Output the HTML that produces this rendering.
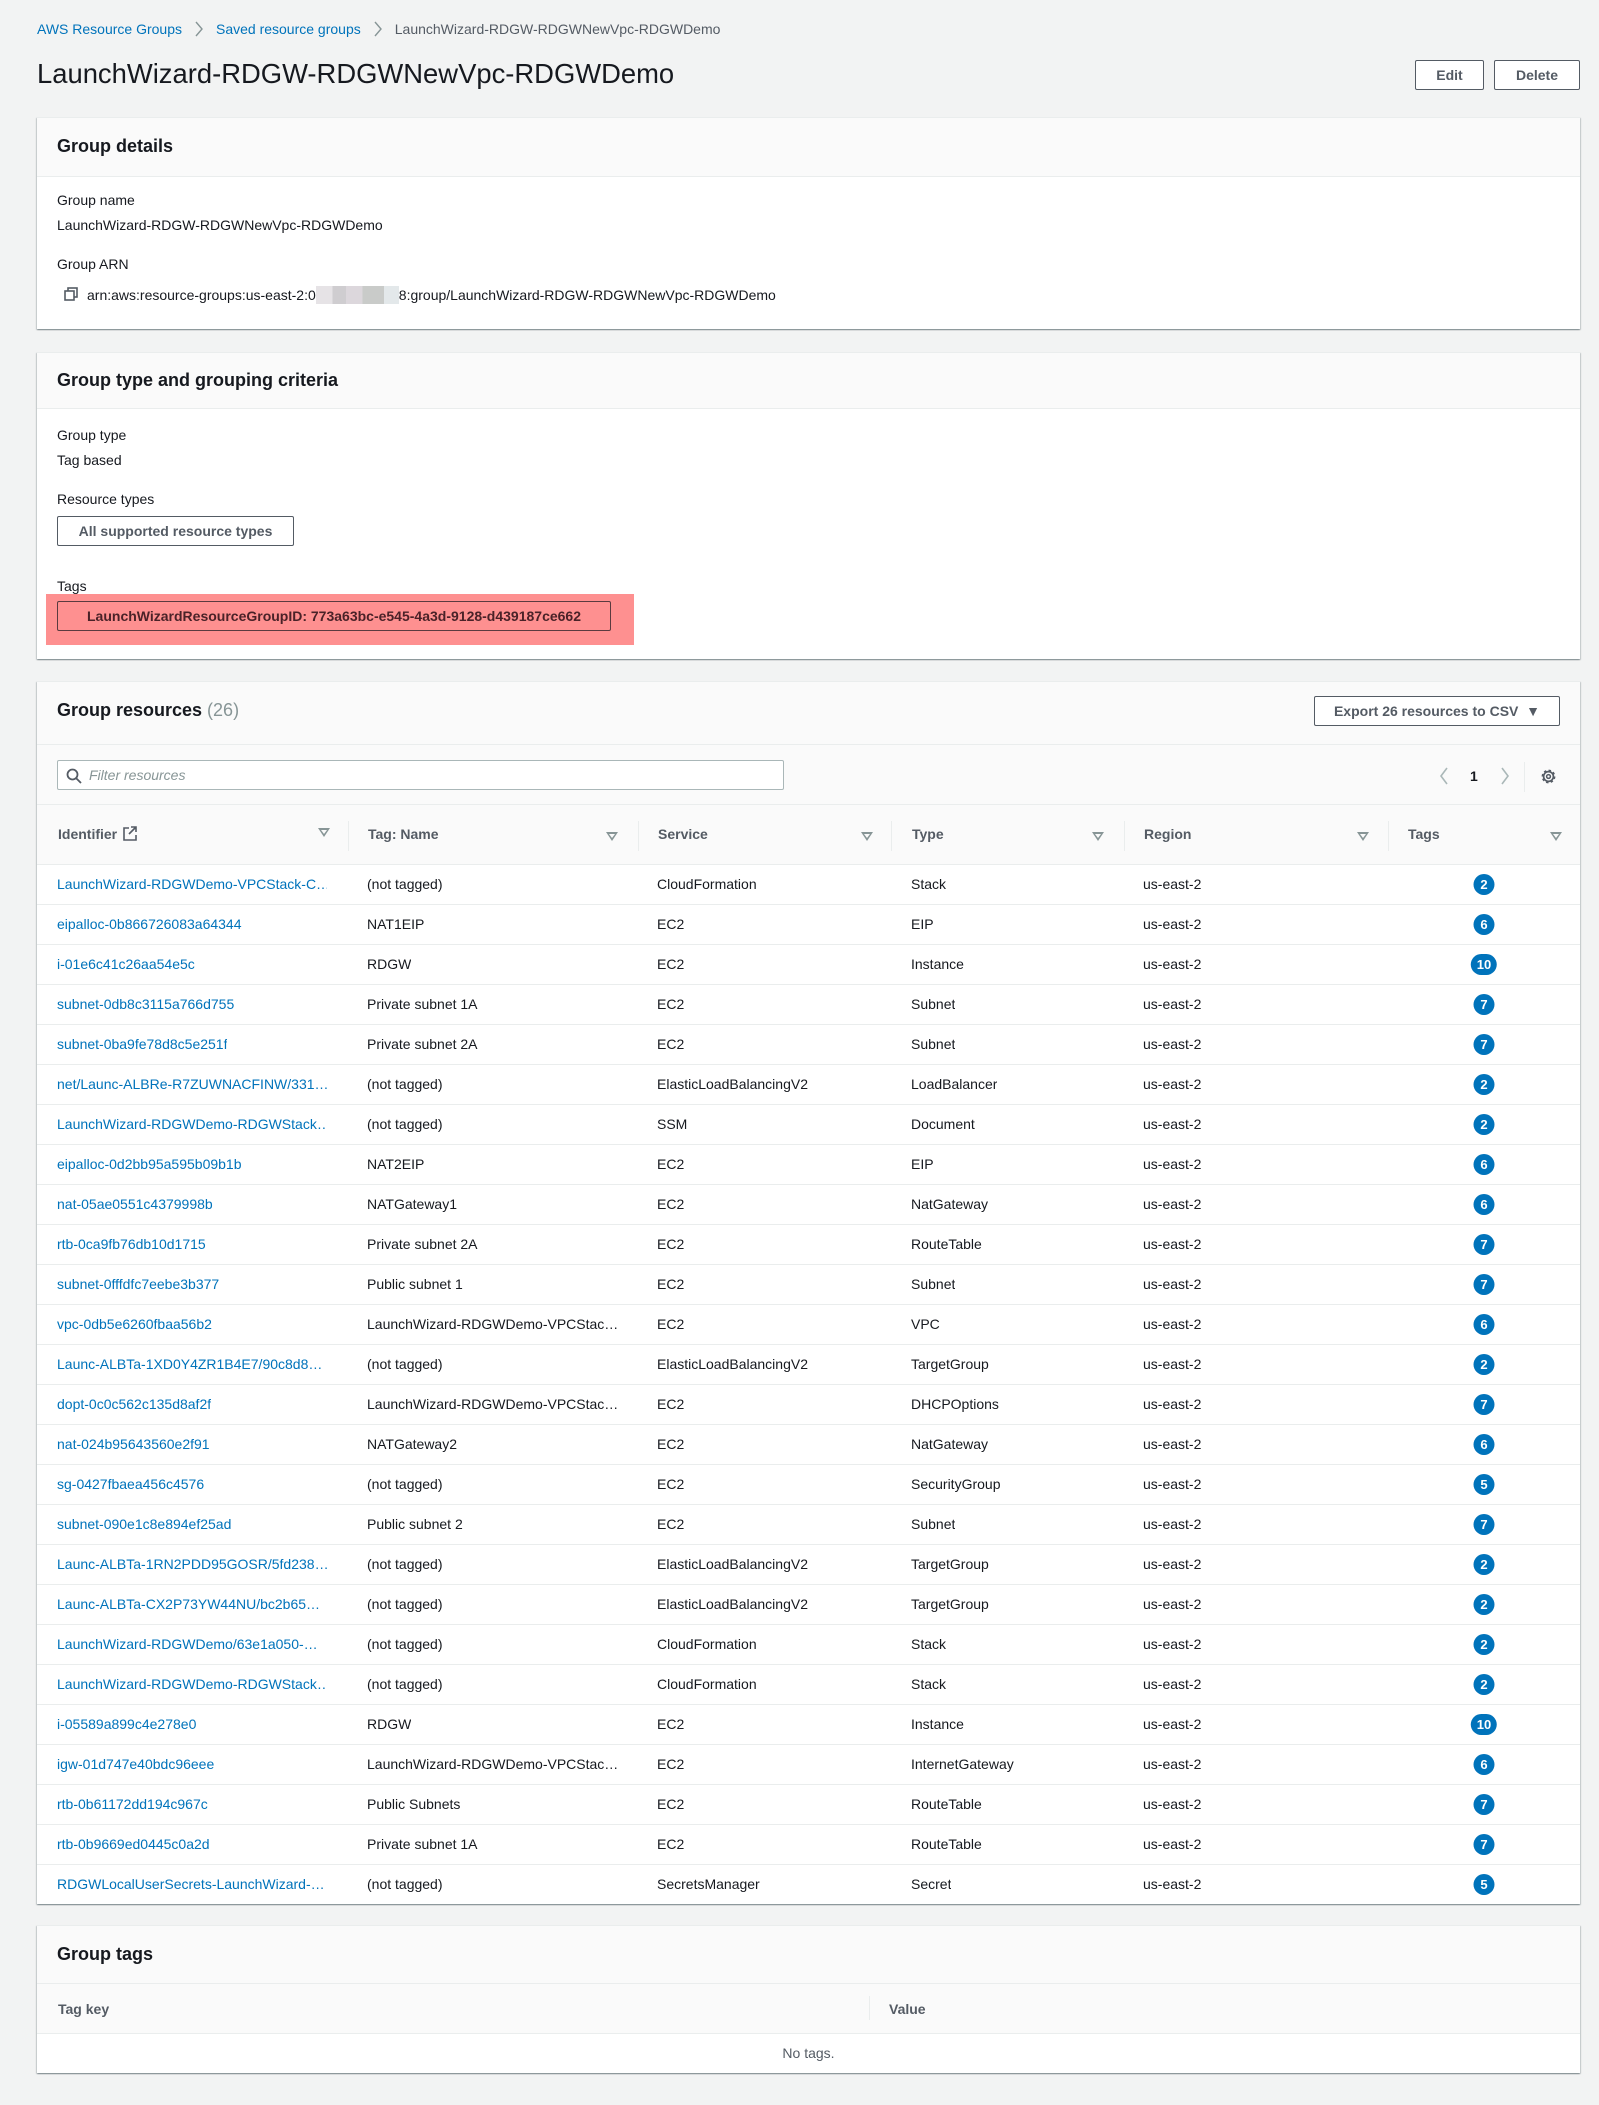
<!DOCTYPE html>
<html><head><meta charset="utf-8">
<style>
*{box-sizing:border-box;margin:0;padding:0}
body{width:1599px;height:2105px;background:#f2f3f3;font-family:"Liberation Sans",sans-serif;font-size:14px;color:#16191f;position:relative;overflow:hidden}
.a{position:absolute;white-space:nowrap}
.card{position:absolute;left:37px;width:1543px;background:#fff;box-shadow:0 1px 1px 0 rgba(0,28,36,.3),1px 1px 1px 0 rgba(0,28,36,.15),-1px 1px 1px 0 rgba(0,28,36,.15);border-top:1px solid #eaeded}
.hdr{position:absolute;left:0;top:0;width:100%;background:#fafafa;border-bottom:1px solid #eaeded}
.h2{font-size:18px;font-weight:bold}
.btn{position:absolute;border:1px solid #545b64;border-radius:2px;background:#fff;font-weight:bold;color:#545b64;text-align:center;font-size:14px}
.lk{color:#0073bb}
.th{font-weight:bold;color:#545b64}
.row{position:absolute;left:0;width:100%;height:40px;border-top:1px solid #eaeded}
.row span{position:absolute;top:11px;white-space:nowrap;overflow:hidden}
.bd{position:absolute;top:9px;height:21px;min-width:21px;padding:0 6px;border-radius:11px;background:#0073bb;color:#fff;font-size:13px;font-weight:bold;text-align:center;line-height:21px;transform:translateX(-50%)}
.sep{position:absolute;width:1px;background:#eaeded}
.tri{position:absolute;width:0;height:0;border-left:6px solid transparent;border-right:6px solid transparent;border-top:9px solid #879596}
.tri:after{content:"";position:absolute;left:-3px;top:-7px;border-left:3px solid transparent;border-right:3px solid transparent;border-top:4px solid #fafafa}
.chev{display:inline-block;vertical-align:-3px;margin:0 12px}
</style></head><body>

<div class="a" style="left:37px;top:21px;font-size:14px"><span class="lk">AWS Resource Groups</span><svg class="chev" width="10" height="16" viewBox="0 0 10 16"><path d="M2 1l6 7-6 7" fill="none" stroke="#879596" stroke-width="1.4"/></svg><span class="lk">Saved resource groups</span><svg class="chev" width="10" height="16" viewBox="0 0 10 16"><path d="M2 1l6 7-6 7" fill="none" stroke="#879596" stroke-width="1.4"/></svg><span style="color:#545b64">LaunchWizard-RDGW-RDGWNewVpc-RDGWDemo</span></div>
<div class="a" style="left:37px;top:58px;font-size:27.4px">LaunchWizard-RDGW-RDGWNewVpc-RDGWDemo</div>
<div class="btn" style="left:1415px;top:60px;width:69px;height:30px;line-height:28px">Edit</div>
<div class="btn" style="left:1494px;top:60px;width:86px;height:30px;line-height:28px">Delete</div>

<div class="card" style="top:117px;height:212px">
 <div class="hdr" style="height:59px"><div class="a h2" style="left:20px;top:18px">Group details</div></div>
 <div class="a" style="left:20px;top:74px">Group name</div>
 <div class="a" style="left:20px;top:99px">LaunchWizard-RDGW-RDGWNewVpc-RDGWDemo</div>
 <div class="a" style="left:20px;top:138px">Group ARN</div>
 <svg class="a" style="left:27px;top:169px" width="14" height="14" viewBox="0 0 14 14"><rect x="4" y="1" width="9" height="9" fill="none" stroke="#545b64" stroke-width="1.6"/><rect x="1" y="4" width="9" height="9" fill="#fff" stroke="#545b64" stroke-width="1.6"/></svg>
 <div class="a" style="left:50px;top:168px">arn:aws:resource-groups:us-east-2:0<span style="display:inline-block;width:83px;height:18px;vertical-align:-4px;background:linear-gradient(90deg,#e6e3e6 0 20%,#cfcdd0 20% 36%,#dcd7dc 36% 56%,#c9cbc9 56% 82%,#e3e8ea 82%)"></span>8:group/LaunchWizard-RDGW-RDGWNewVpc-RDGWDemo</div>
</div>

<div class="card" style="top:352px;height:307px">
 <div class="hdr" style="height:56px"><div class="a h2" style="left:20px;top:17px">Group type and grouping criteria</div></div>
 <div class="a" style="left:20px;top:74px">Group type</div>
 <div class="a" style="left:20px;top:99px">Tag based</div>
 <div class="a" style="left:20px;top:138px">Resource types</div>
 <div class="btn" style="left:20px;top:163px;width:237px;height:30px;line-height:28px">All supported resource types</div>
 <div class="a" style="left:20px;top:225px">Tags</div>
 <div class="a" style="left:9px;top:241px;width:588px;height:51px;background:#fe9090"></div>
 <div class="btn" style="left:20px;top:248px;width:554px;height:30px;line-height:28px;background:transparent;color:#4a2228;border-color:#5a3a3f">LaunchWizardResourceGroupID: 773a63bc-e545-4a3d-9128-d439187ce662</div>
</div>

<div class="card" style="top:681px;height:1223px">
 <div class="hdr" style="height:182px;border-bottom:none">
  <div class="a h2" style="left:20px;top:18px">Group resources <span style="color:#879596;font-weight:normal">(26)</span></div>
  <div class="btn" style="left:1277px;top:14px;width:246px;height:30px;line-height:28px">Export 26 resources to CSV &nbsp;&#9660;</div>
  <div style="position:absolute;left:0;top:62px;width:100%;border-top:1px solid #eaeded"></div>
  <div class="a" style="left:20px;top:78px;width:727px;height:30px;border:1px solid #aab7b8;border-radius:2px;background:#fff"></div>
  <svg class="a" style="left:29px;top:86px" width="16" height="16" viewBox="0 0 16 16"><circle cx="6.5" cy="6.5" r="5" fill="none" stroke="#545b64" stroke-width="1.8"/><path d="M10.2 10.2L15 15" stroke="#545b64" stroke-width="1.8"/></svg>
  <div class="a" style="left:52px;top:85px;font-style:italic;color:#879596">Filter resources</div>
  <svg class="a" style="left:1402px;top:85px" width="10" height="18" viewBox="0 0 10 18"><path d="M8 1L2 9l6 8" fill="none" stroke="#aab7b8" stroke-width="1.6"/></svg>
  <div class="a" style="left:1433px;top:86px;font-weight:bold">1</div>
  <svg class="a" style="left:1463px;top:85px" width="10" height="18" viewBox="0 0 10 18"><path d="M2 1l6 8-6 8" fill="none" stroke="#aab7b8" stroke-width="1.6"/></svg>
  <div class="sep" style="left:1487px;top:80px;height:30px"></div>
  <svg class="a" style="left:1503px;top:86px" width="17" height="17" viewBox="0 0 16 16"><circle cx="8" cy="8" r="5.5" fill="none" stroke="#545b64" stroke-width="2" stroke-dasharray="2.2 2.1"/><circle cx="8" cy="8" r="4.6" fill="none" stroke="#545b64" stroke-width="1.6"/><circle cx="8" cy="8" r="1.8" fill="none" stroke="#545b64" stroke-width="1.4"/></svg>
  <div style="position:absolute;left:0;top:122px;width:100%;border-top:1px solid #eaeded"></div>
  <div class="a th" style="left:21px;top:144px">Identifier</div>
  <svg class="a" style="left:86px;top:144px" width="14" height="15" viewBox="0 0 14 15"><path d="M6 2H1v12h12V9M8 1h5v5M13 1L6 8" fill="none" stroke="#545b64" stroke-width="1.6"/></svg>
  <div class="tri" style="left:281px;top:146px"></div>
  <div class="sep" style="left:311px;top:139px;height:30px"></div>
  <div class="a th" style="left:331px;top:144px">Tag: Name</div>
  <div class="tri" style="left:569px;top:150px"></div>
  <div class="sep" style="left:601px;top:139px;height:30px"></div>
  <div class="a th" style="left:621px;top:144px">Service</div>
  <div class="tri" style="left:824px;top:150px"></div>
  <div class="sep" style="left:854px;top:139px;height:30px"></div>
  <div class="a th" style="left:875px;top:144px">Type</div>
  <div class="tri" style="left:1055px;top:150px"></div>
  <div class="sep" style="left:1087px;top:139px;height:30px"></div>
  <div class="a th" style="left:1107px;top:144px">Region</div>
  <div class="tri" style="left:1320px;top:150px"></div>
  <div class="sep" style="left:1351px;top:139px;height:30px"></div>
  <div class="a th" style="left:1371px;top:144px">Tags</div>
  <div class="tri" style="left:1513px;top:150px"></div>
 </div>
 <div id="rows"></div>
</div>

<div class="card" style="top:1925px;height:148px">
 <div class="hdr" style="height:108px">
  <div class="a h2" style="left:20px;top:18px">Group tags</div>
  <div style="position:absolute;left:0;top:57px;width:100%;border-top:1px solid #eaeded"></div>
  <div class="a th" style="left:21px;top:75px">Tag key</div>
  <div class="sep" style="left:832px;top:70px;height:24px"></div>
  <div class="a th" style="left:852px;top:75px">Value</div>
 </div>
 <div class="a" style="left:0;width:100%;top:119px;text-align:center;color:#545b64">No tags.</div>
</div>

<script>
var d=[
["LaunchWizard-RDGWDemo-VPCStack-C…","(not tagged)","CloudFormation","Stack","2"],
["eipalloc-0b866726083a64344","NAT1EIP","EC2","EIP","6"],
["i-01e6c41c26aa54e5c","RDGW","EC2","Instance","10"],
["subnet-0db8c3115a766d755","Private subnet 1A","EC2","Subnet","7"],
["subnet-0ba9fe78d8c5e251f","Private subnet 2A","EC2","Subnet","7"],
["net/Launc-ALBRe-R7ZUWNACFINW/331…","(not tagged)","ElasticLoadBalancingV2","LoadBalancer","2"],
["LaunchWizard-RDGWDemo-RDGWStack…","(not tagged)","SSM","Document","2"],
["eipalloc-0d2bb95a595b09b1b","NAT2EIP","EC2","EIP","6"],
["nat-05ae0551c4379998b","NATGateway1","EC2","NatGateway","6"],
["rtb-0ca9fb76db10d1715","Private subnet 2A","EC2","RouteTable","7"],
["subnet-0fffdfc7eebe3b377","Public subnet 1","EC2","Subnet","7"],
["vpc-0db5e6260fbaa56b2","LaunchWizard-RDGWDemo-VPCStac…","EC2","VPC","6"],
["Launc-ALBTa-1XD0Y4ZR1B4E7/90c8d8…","(not tagged)","ElasticLoadBalancingV2","TargetGroup","2"],
["dopt-0c0c562c135d8af2f","LaunchWizard-RDGWDemo-VPCStac…","EC2","DHCPOptions","7"],
["nat-024b95643560e2f91","NATGateway2","EC2","NatGateway","6"],
["sg-0427fbaea456c4576","(not tagged)","EC2","SecurityGroup","5"],
["subnet-090e1c8e894ef25ad","Public subnet 2","EC2","Subnet","7"],
["Launc-ALBTa-1RN2PDD95GOSR/5fd238…","(not tagged)","ElasticLoadBalancingV2","TargetGroup","2"],
["Launc-ALBTa-CX2P73YW44NU/bc2b65…","(not tagged)","ElasticLoadBalancingV2","TargetGroup","2"],
["LaunchWizard-RDGWDemo/63e1a050-…","(not tagged)","CloudFormation","Stack","2"],
["LaunchWizard-RDGWDemo-RDGWStack…","(not tagged)","CloudFormation","Stack","2"],
["i-05589a899c4e278e0","RDGW","EC2","Instance","10"],
["igw-01d747e40bdc96eee","LaunchWizard-RDGWDemo-VPCStac…","EC2","InternetGateway","6"],
["rtb-0b61172dd194c967c","Public Subnets","EC2","RouteTable","7"],
["rtb-0b9669ed0445c0a2d","Private subnet 1A","EC2","RouteTable","7"],
["RDGWLocalUserSecrets-LaunchWizard-…","(not tagged)","SecretsManager","Secret","5"]];
var h="";
d.forEach(function(r,i){
h+='<div class="row" style="top:'+(182+i*40)+'px"><span class="lk" style="left:20px;max-width:270px">'+r[0]+'</span><span style="left:330px;max-width:260px">'+r[1]+'</span><span style="left:620px">'+r[2]+'</span><span style="left:874px">'+r[3]+'</span><span style="left:1106px">us-east-2</span><div class="bd" style="left:1447px">'+r[4]+'</div></div>';
});
document.getElementById("rows").innerHTML=h;
</script>
</body></html>
